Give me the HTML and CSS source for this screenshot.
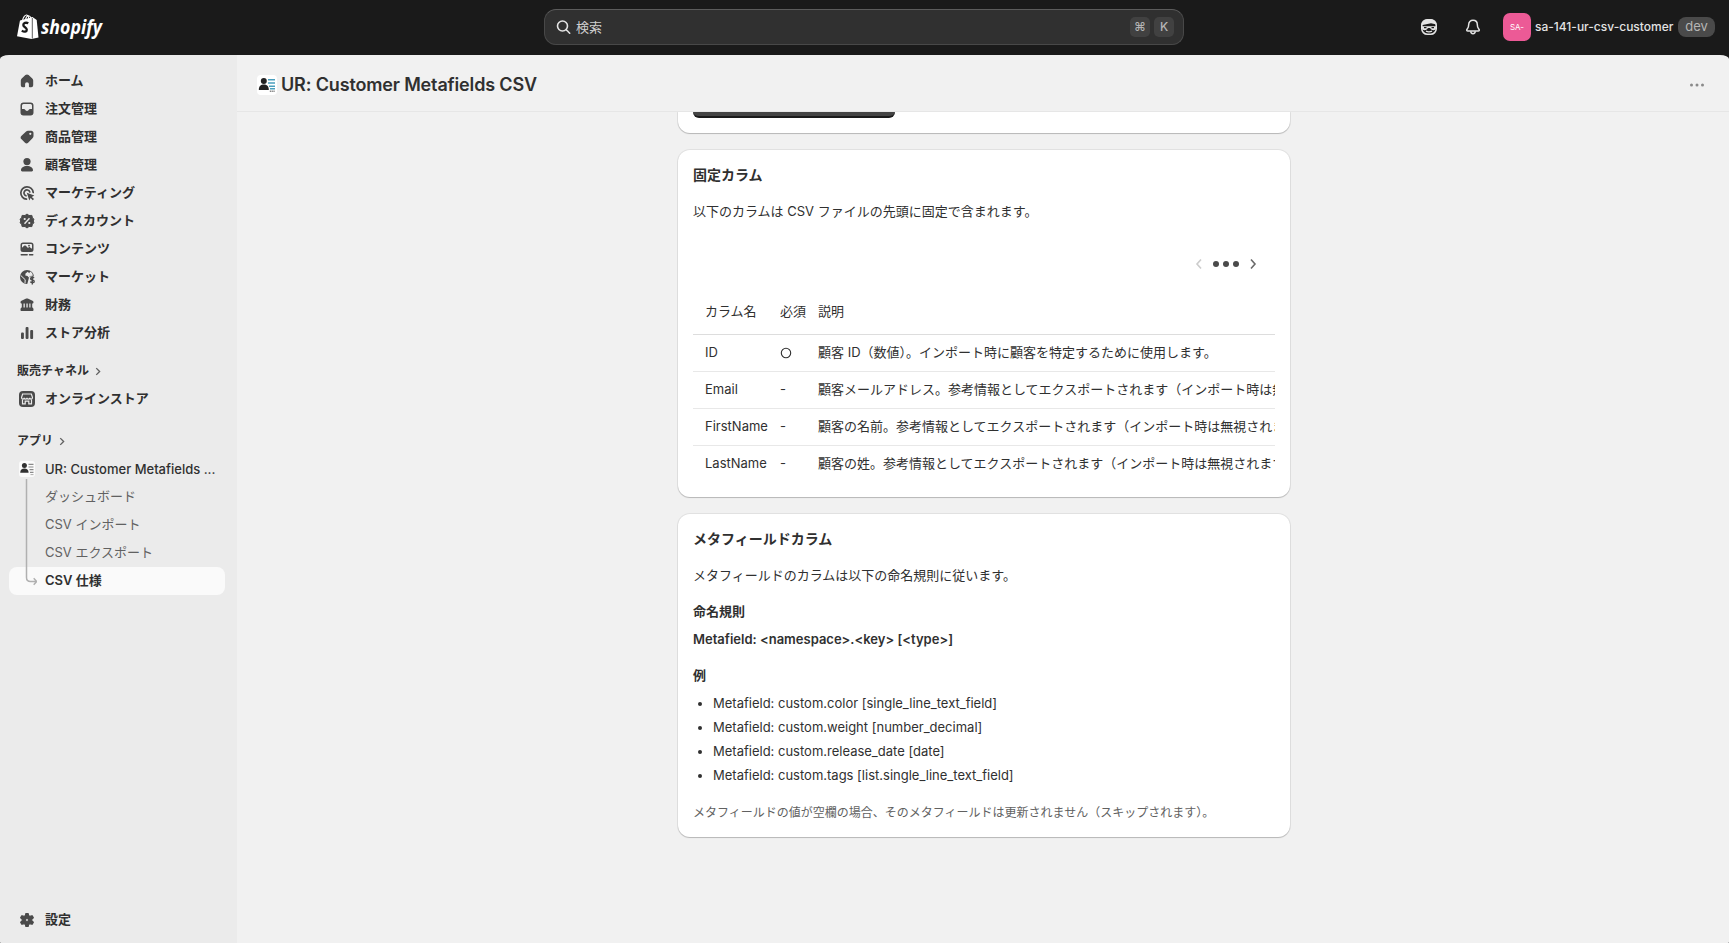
FILE: index.html
```html
<!DOCTYPE html>
<html lang="ja">
<head>
<meta charset="utf-8">
<title>UR: Customer Metafields CSV</title>
<link rel="stylesheet" href="styles.css">
</head>
<body>
<header class="topbar">
  <svg class="logo" width="90" height="28" viewBox="0 0 90 28">
    <path d="M3 7.5 15.500 4l4.200 3 1.800 17.500-7 1.600L0 23.300z" fill="#fff"/>
    <path d="M5.500 7.500C6.200 4 8.200 1.800 9.700 2c1.600.2 2 2 2 4.500M8.500 6.500C9.200 4 10.300 2.700 11.700 2.800c1.200.1 2 1.200 2.400 2.800" fill="none" stroke="#fff" stroke-width="1.100"/>
    <path d="M15.300 5v20.500" stroke="#1a1a1a" stroke-width=".7"/>
    <path d="M11.300 10.300c-2.300-1.200-5-.3-5 1.700 0 2.200 3.500 2.300 3.500 4.700 0 2.200-2.600 2.600-5 .9" fill="none" stroke="#1a1a1a" stroke-width="2.300"/>
    <text x="24" y="20.500" class="logo-word" textLength="61" lengthAdjust="spacingAndGlyphs">shopify</text>
  </svg>
  <div class="search">
    <svg width="16" height="16" viewBox="0 0 16 16" fill="none" stroke="#e3e3e3" stroke-width="1.600" stroke-linecap="round"><circle cx="6.500" cy="7" r="5"/><path d="m10.300 10.800 3.400 3.400"/></svg>
    <span class="search-label">検索</span>
    <kbd class="key key-cmd">⌘</kbd><kbd class="key">K</kbd>
  </div>
  <div class="account">
    <svg class="sidekick" width="20" height="20" viewBox="0 0 20 20">
      <rect x="2.800" y="2.800" width="14.400" height="14.400" rx="5.500" fill="none" stroke="#e3e3e3" stroke-width="1.600"/>
      <path d="M2.500 8.300C3 4 6 2 10 2s7 2 7.500 5.500L12 6.300 6 7.600z" fill="#e3e3e3"/>
      <path d="M3 9.200h14v1.300c0 1.800-1 2.700-2.600 2.700-1.900 0-2.600-1-3.400-2.200h-2c-.8 1.200-1.500 2.200-3.400 2.200C4 13.200 3 12.300 3 10.500z" fill="#e3e3e3"/>
      <path d="M5 10.600h2.500M12.500 10.600H15" stroke="#1a1a1a" stroke-width="1.200"/>
      <path d="M7 14.200c2 1 4 1 6 0" fill="none" stroke="#e3e3e3" stroke-width="1.300"/>
    </svg>
    <svg class="bell" width="20" height="20" viewBox="0 0 20 20" fill="none" stroke="#e3e3e3" stroke-width="1.500" stroke-linejoin="round"><path d="M10 3.300c-2.600 0-4.300 1.800-4.300 4.300 0 2.400-.5 3.500-1.500 4.500-.9 1-.5 2 .7 2h10.200c1.200 0 1.600-1 .7-2-1-1-1.500-2.100-1.500-4.500 0-2.500-1.700-4.300-4.300-4.300z"/><path d="M7.800 14.300c0 1.500.9 2.400 2.200 2.400s2.200-.9 2.200-2.400"/></svg>
    <span class="avatar">SA-</span>
    <span class="store">sa-141-ur-csv-customer</span>
    <span class="pill">dev</span>
  </div>
</header>

<div class="frame">
  <nav class="sidebar">
    <a class="item"><svg class="ico" viewBox="0 0 20 20"><path d="M8.400 4.100a2.400 2.400 0 0 1 3.200 0l3.700 3.300c.6.500.9 1.200.9 2v4.800a2 2 0 0 1-2 2h-1.400a.9.900 0 0 1-.9-.9v-2.200a1.900 1.900 0 0 0-3.800 0v2.200a.9.900 0 0 1-.9.900H5.800a2 2 0 0 1-2-2V9.400c0-.8.300-1.500.9-2z"/></svg>ホーム</a>
    <a class="item"><svg class="ico" viewBox="0 0 20 20"><path fill-rule="evenodd" d="M6.500 3.500h7a3 3 0 0 1 3 3v7a3 3 0 0 1-3 3h-7a3 3 0 0 1-3-3v-7a3 3 0 0 1 3-3zM6.500 5A1.500 1.500 0 0 0 5 6.500V10h2c.5 0 .8.200 1 .6.400.9 1.100 1.400 2 1.400s1.600-.5 2-1.400c.2-.4.500-.6 1-.6h2V6.500A1.500 1.500 0 0 0 13.500 5z"/></svg>注文管理</a>
    <a class="item"><svg class="ico" viewBox="0 0 20 20"><path fill-rule="evenodd" d="M11 3.700h3.300c1.200 0 2.200 1 2.200 2.200V9c0 .7-.3 1.400-.8 1.900l-4.600 4.800c-.9.900-2.200.9-3.100 0l-3.700-3.600c-.9-.9-.9-2.300 0-3.200L9.100 4.500c.5-.5 1.200-.8 1.900-.8zm2.300 4.200a1.100 1.100 0 1 0 0-2.200 1.100 1.100 0 0 0 0 2.200z"/></svg>商品管理</a>
    <a class="item"><svg class="ico" viewBox="0 0 20 20"><circle cx="10" cy="6.600" r="3.600"/><path d="M4 15.300c0-2.600 2.400-4.300 6-4.300s6 1.700 6 4.300c0 .7-.5 1.200-1.200 1.200H5.200c-.7 0-1.200-.5-1.200-1.200z"/></svg>顧客管理</a>
    <a class="item"><svg class="ico" viewBox="0 0 20 20"><g fill="none" stroke="#4a4a4a" stroke-width="1.700" stroke-linecap="round"><path d="M9.500 16.200A6.200 6.200 0 1 1 16.200 9.500"/><path d="M9 12.800A3 3 0 1 1 12.800 9"/></g><path d="m9.800 9.800 7.500 2.700-2.500 1.400 2.200 2.200-1.200 1.200-2.200-2.200-1.300 2.300z"/></svg>マーケティング</a>
    <a class="item"><svg class="ico" viewBox="0 0 20 20"><path d="m10 3 2 1.500 2.900-.1.500 2.500L17 8.200 16.200 10l.8 1.800-1.600 1.300-.5 2.500-2.900-.1-2 1.500-2-1.500-2.900.1-.5-2.500L3 11.800l.8-1.800L3 8.200l1.600-1.300.5-2.500 2.900.1z" stroke="#4a4a4a" stroke-linejoin="round"/><path d="m7.500 12.700 5-5.400" stroke="#ebebeb" stroke-width="1.400"/><circle cx="7.700" cy="8" r="1.100" fill="#ebebeb"/><circle cx="12.300" cy="12" r="1.100" fill="#ebebeb"/></svg>ディスカウント</a>
    <a class="item"><svg class="ico" viewBox="0 0 20 20"><path fill-rule="evenodd" d="M6 3.500h8a2.500 2.500 0 0 1 2.500 2.500v4.500A2.500 2.500 0 0 1 14 13H6a2.500 2.500 0 0 1-2.500-2.500V6A2.500 2.500 0 0 1 6 3.500zM5 8.800l2.100-2c.5-.5 1.200-.5 1.700 0l2.200 2.100.6-.5c.4-.4 1-.4 1.500 0L15 9.700V6a1 1 0 0 0-1-1H6a1 1 0 0 0-1 1z"/><circle cx="12" cy="6.700" r=".9"/><path d="M4.200 15.800h6M12.500 15.800h3.300" stroke="#4a4a4a" stroke-width="1.400" stroke-linecap="round"/></svg>コンテンツ</a>
    <a class="item"><svg class="ico" viewBox="0 0 20 20"><circle cx="10" cy="10" r="7"/><path d="M10.800 4.700 8.500 6.500l-.2 1.900 2.200.6 1.300 1.600 1.200-1.500 2.800-.3c0-2-1.200-3.500-2.600-4.200l-1 1.700z" fill="#ebebeb"/><path d="m3.800 8.500 4.400 4.200-.2 3.500" stroke="#ebebeb" stroke-width="1" fill="none"/><path d="M12.300 9.500h6.200v8.500H10z" fill="#ebebeb"/><path d="M17 11.200c-.6-1-3.400-1-3.400.6s3.600.9 3.600 2.600c0 1.600-3 1.600-3.800.3M15.300 9.200v8.200" stroke="#4a4a4a" stroke-width="1.400" fill="none"/></svg>マーケット</a>
    <a class="item"><svg class="ico" viewBox="0 0 20 20"><path d="M9.200 3.600a2 2 0 0 1 1.600 0l4.700 2.200c.6.300 1 .8 1 1.400 0 .7-.5 1.300-1.200 1.300H4.700c-.7 0-1.200-.6-1.200-1.300 0-.6.400-1.100 1-1.400zM4.800 8h1.700v5H4.800zm3 0h1.600v5H7.800zm2.900 0h1.600v5h-1.600zm2.800 0h1.700v5h-1.700zM4.600 12.500h10.800c.6 0 1.100 1 1.100 2.200 0 .8-.3 1.300-1 1.300h-11c-.7 0-1-.5-1-1.300 0-1.200.5-2.200 1.100-2.200z"/></svg>財務</a>
    <a class="item"><svg class="ico" viewBox="0 0 20 20"><rect x="4" y="9.500" width="2.900" height="6.500" rx="1"/><rect x="8.600" y="4" width="2.900" height="12" rx="1"/><rect x="13.200" y="7" width="2.900" height="9" rx="1"/></svg>ストア分析</a>
    <div class="section">販売チャネル<svg class="chev" viewBox="0 0 8 8"><path d="m2 1 3 3-3 3"/></svg></div>
    <a class="item"><svg class="ico" viewBox="0 0 20 20"><rect x="2" y="2" width="16" height="16" rx="4"/><g fill="none" stroke="#ebebeb" stroke-width="1.200"><path d="M5.600 5h8.800l1.100 3.500c0 2-2.700 2-2.700.3 0 1.700-2.800 1.700-2.800 0 0 1.700-2.800 1.700-2.800 0 0 1.700-2.700 1.700-2.700-.3z"/><path d="M5.500 10.500v4.300h2.700v-2.600h3.600v2.600h2.700v-4.300"/></g></svg>オンラインストア</a>
    <div class="section">アプリ<svg class="chev" viewBox="0 0 8 8"><path d="m2 1 3 3-3 3"/></svg></div>
    <a class="item app"><svg class="ico" viewBox="0 0 20 20"><rect x="2" y="2" width="16" height="16" rx="3" fill="#fafafa"/><circle cx="7.400" cy="6.500" r="2.500" fill="#303030"/><path d="M3.200 13.700c0-3 1.800-4.200 4.200-4.200s4.200 1.200 4.200 4.200z" fill="#303030"/><path d="M11.500 5.300h5M11.500 8h5M12.500 10.700h4M13 13.400h3.500" stroke="#8a8a8a" stroke-width="1.200"/><path d="M13.500 15.600h3" stroke="#aaa"/></svg>UR: Customer Metafields ...</a>
    <div class="sub">
      <svg class="branch" width="20" height="112" viewBox="0 0 20 112"><path d="M9.500 0v98.500q0 4 4 4h6M16.700 99.200l3 3.300-3 3.300"/></svg>
      <a class="item child">ダッシュボード</a>
      <a class="item child">CSV インポート</a>
      <a class="item child">CSV エクスポート</a>
      <a class="item child current">CSV 仕様</a>
    </div>
    <a class="item settings"><svg class="ico" viewBox="0 0 20 20"><path fill-rule="evenodd" stroke="#4a4a4a" stroke-width="1.200" stroke-linejoin="round" d="M8.900 3.500h2.200l.5 2.100 1.300.8 2.100-.7 1.300 2-1.600 1.500v1.600l1.600 1.500-1.300 2-2.100-.7-1.300.8-.5 2.100H8.900l-.5-2.100-1.300-.8-2.100.7-1.300-2 1.600-1.500V9.200L3.700 7.700l1.300-2 2.100.7 1.300-.8zM10 11.500a1.500 1.500 0 1 0 0-3 1.500 1.500 0 0 0 0 3z"/></svg>設定</a>
  </nav>

  <main class="main">
    <div class="titlebar">
      <svg width="20" height="20" viewBox="0 0 20 20"><rect width="20" height="20" rx="4" fill="#fff"/><circle cx="6.800" cy="6" r="3" fill="#222"/><path d="M1.800 15c0-3.700 2-5.400 5-5.400s5 1.700 5 5.400z" fill="#222"/><path d="M11 4.800h7M11 8h7M12 11.200h6M13 13.700h5" stroke="#4a9fbd" stroke-width="1.500"/><path d="M12.800 16.300h5" stroke="#888" stroke-width="1.600" stroke-dasharray="1.300 .5"/></svg>
      <h1>UR: Customer Metafields CSV</h1>
      <svg class="more" width="16" height="4" viewBox="0 0 16 4"><circle cx="2.500" cy="2" r="1.500"/><circle cx="8" cy="2" r="1.500"/><circle cx="13.500" cy="2" r="1.500"/></svg>
    </div>
    <div class="content">
      <section class="card card-cut"><div class="button-edge"></div></section>
      <section class="card">
        <h2>固定カラム</h2>
        <p class="lead">以下のカラムは CSV ファイルの先頭に固定で含まれます。</p>
        <div class="table">
          <div class="pager">
            <svg width="8" height="12" viewBox="0 0 8 12" class="off"><path d="M6 1.500 2 6l4 4.500"/></svg>
            <span class="dots"><i></i><i></i><i></i></span>
            <svg width="8" height="12" viewBox="0 0 8 12"><path d="M2 1.500 6 6l-4 4.500"/></svg>
          </div>
          <div class="row head"><span>カラム名</span><span>必須</span><span>説明</span></div>
          <div class="row"><span>ID</span><span><svg class="ring" width="12" height="12" viewBox="0 0 12 12"><circle cx="6" cy="6" r="4.700"/></svg></span><span>顧客 ID（数値）。インポート時に顧客を特定するために使用します。</span></div>
          <div class="row"><span>Email</span><span>-</span><span>顧客メールアドレス。参考情報としてエクスポートされます（インポート時は無視されます）。</span></div>
          <div class="row"><span>FirstName</span><span>-</span><span>顧客の名前。参考情報としてエクスポートされます（インポート時は無視されます）。</span></div>
          <div class="row"><span>LastName</span><span>-</span><span>顧客の姓。参考情報としてエクスポートされます（インポート時は無視されます）。</span></div>
        </div>
      </section>
      <section class="card card-last">
        <h2>メタフィールドカラム</h2>
        <p class="lead">メタフィールドのカラムは以下の命名規則に従います。</p>
        <h3>命名規則</h3>
        <p class="rule">Metafield: &lt;namespace&gt;.&lt;key&gt; [&lt;type&gt;]</p>
        <h3>例</h3>
        <ul>
          <li>Metafield: custom.color [single_line_text_field]</li>
          <li>Metafield: custom.weight [number_decimal]</li>
          <li>Metafield: custom.release_date [date]</li>
          <li>Metafield: custom.tags [list.single_line_text_field]</li>
        </ul>
        <p class="note">メタフィールドの値が空欄の場合、そのメタフィールドは更新されません（スキップされます）。</p>
      </section>
    </div>
  </main>
</div>
</body>
</html>
```
FILE: styles.css
```css
* { box-sizing: border-box; }
body {
  margin: 0;
  height: 943px;
  overflow: hidden;
  display: flex;
  flex-direction: column;
  background: #1a1a1a;
  color: #303030;
  font: 400 13px/20px Inter, "Noto Sans CJK JP", sans-serif;
}
h1, h2, h3, p, ul { margin: 0; }

.topbar {
  height: 55px;
  flex: none;
  display: grid;
  grid-template-columns: 544px 640px 1fr;
  align-items: center;
  padding-bottom: 1px;
}
.logo { margin-left: 17px; overflow: visible; }
.logo-word { font: italic 700 19px "Open Sans", sans-serif; fill: #fff; }
.search {
  height: 36px;
  display: flex;
  align-items: center;
  padding: 0 9px 0 11px;
  border: 1px solid #484848;
  border-top-color: #5c5c5c;
  border-radius: 12px;
  background: #303030;
}
.search-label { margin-left: 4px; padding-bottom: 1px; flex: 1; color: #cfcfcf; }
.key {
  width: 20px;
  height: 20px;
  margin-left: 4px;
  border-radius: 5px;
  background: #414141;
  color: #b5b5b5;
  font: 500 12px/20px Inter, sans-serif;
  text-align: center;
}
.key-cmd { font-family: Inter, "DejaVu Sans", sans-serif; }
.account { display: flex; align-items: center; justify-content: flex-end; padding-right: 14px; }
.sidekick { margin-right: 24px; }
.bell { margin-right: 20px; }
.avatar {
  width: 28px;
  height: 28px;
  border-radius: 7px;
  background: #ec5a96;
  color: #fff;
  font-size: 8px;
  line-height: 28px;
  text-align: center;
}
.store { margin-left: 4px; width: 143px; color: #e3e3e3; font-size: 12px; font-weight: 500; white-space: nowrap; }
.pill {
  width: 37px;
  height: 20px;
  border-radius: 8px;
  background: #4a4a4a;
  color: #b5b5b5;
  text-align: center;
  line-height: 19px;
}

.frame {
  flex: 1;
  min-height: 0;
  display: flex;
  overflow: hidden;
  border-radius: 9px 9px 1px 1px / 4px 4px 1px 1px;
}
.sidebar {
  width: 237px;
  flex: none;
  display: flex;
  flex-direction: column;
  padding: 12px 12px 9px 9px;
  background: #ebebeb;
}
.item {
  height: 28px;
  flex: none;
  display: flex;
  align-items: center;
  padding: 0 0 2px 8px;
  font-weight: 600;
  white-space: nowrap;
}
.ico { width: 20px; height: 20px; margin: 1px 8px 0 0; fill: #4a4a4a; }
.section {
  height: 28px;
  margin-top: 10px;
  display: flex;
  align-items: center;
  padding-left: 8px;
  font-size: 12px;
  font-weight: 600;
}
.item + .section ~ .section { margin-top: 14px; }
.chev { width: 9px; height: 9px; margin-left: 5px; fill: none; stroke: #616161; stroke-width: 1.2; }
.app { font-weight: 550; padding-bottom: 1px; }
.sub { position: relative; }
.child { padding-left: 36px; color: #616161; font-weight: 400; }
.current { border-radius: 8px; background: #fafafa; color: #303030; font-weight: 600; }
.branch { position: absolute; left: 8px; top: -4px; fill: none; stroke: #b0b0b0; stroke-width: 1.5; }
.settings { margin-top: auto; }

.main { flex: 1; min-width: 0; background: #f1f1f1; }
.titlebar {
  height: 57px;
  display: flex;
  align-items: center;
  padding: 4px 24px 0 20px;
  border-bottom: 1px solid #e6e6e6;
}
h1 { margin-left: 4px; font-size: 18px; font-weight: 600; line-height: 24px; letter-spacing: -.15px; }
.more { margin-left: auto; fill: #8a8a8a; }
.content { width: 612px; margin-left: 441px; display: flex; flex-direction: column; gap: 17px; }
.card {
  padding: 15px;
  border-radius: 12px;
  background: #fff;
  box-shadow: 0 1px 1px #00000030, 0 0 0 1px #00000010;
}
.card-cut { height: 21px; padding-top: 0; border-radius: 0 0 12px 12px; clip-path: inset(0 -4px -4px); }
.card-last { padding-bottom: 14px; }
.button-edge { width: 202px; height: 6px; border-bottom: 2px solid #1a1a1a; border-radius: 0 0 7px 7px; background: #444; }
h2 { font-size: 14px; font-weight: 600; line-height: 20px; }
h3 { margin-top: 16px; font-size: 13px; font-weight: 600; line-height: 20px; }
.lead { margin-top: 16px; }

.table { margin-top: 16px; overflow: hidden; }
.pager { height: 53px; display: flex; align-items: center; justify-content: flex-end; gap: 10px; padding-right: 18px; }
.pager svg { fill: none; stroke: #6a6a6a; stroke-width: 1.6; }
.pager .off { stroke: #ccc; }
.dots { display: flex; gap: 4px; }
.dots i { width: 6px; height: 6px; border-radius: 50%; background: #4a4a4a; }
.row {
  height: 37px;
  display: grid;
  grid-template-columns: 75px 38px 1fr;
  align-items: center;
  padding: 0 0 2px 12px;
  border-bottom: 1px solid #e8e8e8;
  white-space: nowrap;
}
.row:last-child { height: 36px; border: 0; }
.head { height: 45px; border-color: #ddd; }
.ring { display: block; margin-top: 1px; fill: none; stroke: #303030; stroke-width: 1.1; }

.rule { margin-top: 8px; font-weight: 630; }
ul { margin-top: 8px; padding-left: 20px; display: grid; gap: 4px; }
.note { margin-top: 18px; color: #616161; font-size: 12px; }
```
